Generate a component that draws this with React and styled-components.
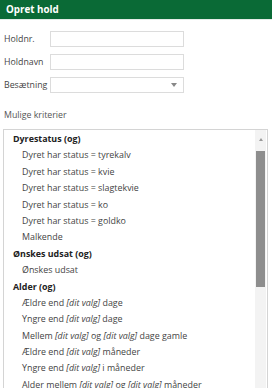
import React from 'react';
import styled, { createGlobalStyle } from 'styled-components';

const GlobalStyle = createGlobalStyle`
  html, body {
    margin: 0;
    padding: 0;
    background: #fff;
    font-family: 'Open Sans', 'Noto Sans', sans-serif;
  }
`;

const Page = styled.div`
  width: 272px;
  height: 388px;
  overflow: hidden;
  background: #fff;
`;

const Header = styled.header`
  height: 19px;
  background: #0a6a36;
  color: #fff;
  font-weight: 700;
  font-size: 9.8px;
  line-height: 19px;
  padding-left: 6px;
  border-bottom: 1px solid #e4ece8;
`;

const Form = styled.div`
  display: flex;
  flex-direction: column;
  gap: 7px;
  padding: 11px 0 0 4px;
`;

const Row = styled.div`
  display: flex;
  align-items: center;
`;

const Label = styled.label`
  width: 46px;
  font-size: 8.8px;
  color: #444;
`;

const Input = styled.div`
  position: relative;
  width: 132px;
  height: 14px;
  border: 1px solid #dcdcdc;
  background: #fff;
`;

const Caret = styled.span`
  position: absolute;
  right: 6px;
  top: 5px;
  width: 0;
  height: 0;
  border-left: 3px solid transparent;
  border-right: 3px solid transparent;
  border-top: 4px solid #888;
`;

const Section = styled.div`
  padding: 16px 0 0 4px;
  font-size: 8.8px;
  color: #555;
`;

const ListBox = styled.div`
  display: flex;
  margin: 8px 0 0 3px;
  width: 263px;
  height: 270px;
  border: 1px solid #d4d4d4;
  border-bottom: none;
  overflow: hidden;
`;

const List = styled.ul`
  flex: 1;
  list-style: none;
  margin: 0;
  padding: 1px 0 0;
`;

const Item = styled.li`
  height: 16.4px;
  line-height: 16.4px;
  font-size: 8.9px;
  white-space: nowrap;
  padding-left: ${p => (p.group ? '9px' : '18px')};
  font-weight: ${p => (p.group ? 700 : 400)};
  color: ${p => (p.group ? '#222' : '#444')};

  em {
    font-style: italic;
  }
`;

const Scrollbar = styled.div`
  width: 11px;
  margin-right: 1px;
  display: flex;
  flex-direction: column;
  align-items: center;
  background: #f3f3f3;
`;

const Arrow = styled.span`
  width: 0;
  height: 0;
  margin: ${p => (p.down ? '0 0 8px' : '8px 0 10px')};
  border-left: 2.5px solid transparent;
  border-right: 2.5px solid transparent;
  ${p => (p.down ? 'border-top: 3px solid #999;' : 'border-bottom: 3px solid #999;')}
`;

const Thumb = styled.div`
  width: 9px;
  height: 136px;
  background: #8e8e8e;
`;

const Track = styled.div`
  flex: 1;
`;

const V = () => <em>[dit valg]</em>;

const items = [
  { group: true, text: 'Dyrestatus (og)' },
  { text: 'Dyret har status = tyrekalv' },
  { text: 'Dyret har status = kvie' },
  { text: 'Dyret har status = slagtekvie' },
  { text: 'Dyret har status = ko' },
  { text: 'Dyret har status = goldko' },
  { text: 'Malkende' },
  { group: true, text: 'Ønskes udsat (og)' },
  { text: 'Ønskes udsat' },
  { group: true, text: 'Alder (og)' },
  { text: <>Ældre end <V /> dage</> },
  { text: <>Yngre end <V /> dage</> },
  { text: <>Mellem <V /> og <V /> dage gamle</> },
  { text: <>Ældre end <V /> måneder</> },
  { text: <>Yngre end <V /> i måneder</> },
  { text: <>Alder mellem <V /> og <V /> måneder</> },
];

const App = () => (
  <Page>
    <GlobalStyle />
    <Header>Opret hold</Header>
    <Form>
      <Row>
        <Label>Holdnr.</Label>
        <Input />
      </Row>
      <Row>
        <Label>Holdnavn</Label>
        <Input />
      </Row>
      <Row>
        <Label>Besætning</Label>
        <Input>
          <Caret />
        </Input>
      </Row>
    </Form>
    <Section>Mulige kriterier</Section>
    <ListBox>
      <List>
        {items.map((it, i) => (
          <Item key={i} group={it.group}>
            {it.text}
          </Item>
        ))}
      </List>
      <Scrollbar>
        <Arrow />
        <Thumb />
        <Track />
        <Arrow down />
      </Scrollbar>
    </ListBox>
  </Page>
);

export default App;
